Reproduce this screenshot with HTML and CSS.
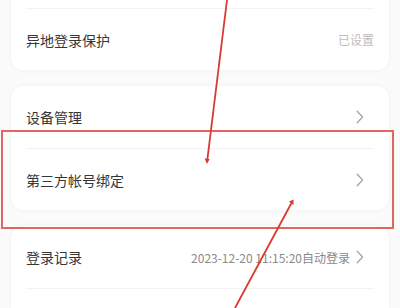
FILE: index.html
```
<!DOCTYPE html>
<html lang="zh-CN">
<head>
<meta charset="utf-8">
<link rel="stylesheet" href="styles.css">
</head>
<body>
<div class="page">
  <div class="card first">
    <div class="row stub"></div>
    <div class="row">
      <span class="label">异地登录保护</span>
      <span class="value light">已设置</span>
    </div>
  </div>
  <div class="card">
    <div class="row">
      <span class="label">设备管理</span>
      <span class="chev"><svg width="8" height="14" viewBox="0 0 8 14"><path d="M1.2 1.2 L6.6 7 L1.2 12.8" fill="none" stroke="#a8a8a8" stroke-width="1.4" stroke-linecap="round" stroke-linejoin="round"/></svg></span>
    </div>
    <div class="row">
      <span class="label">第三方帐号绑定</span>
      <span class="chev"><svg width="8" height="14" viewBox="0 0 8 14"><path d="M1.2 1.2 L6.6 7 L1.2 12.8" fill="none" stroke="#a8a8a8" stroke-width="1.4" stroke-linecap="round" stroke-linejoin="round"/></svg></span>
    </div>
  </div>
  <div class="card last">
    <div class="row">
      <span class="label">登录记录</span>
      <span class="value">2023-12-20 11:15:20自动登录</span>
      <span class="chev"><svg width="8" height="14" viewBox="0 0 8 14"><path d="M1.2 1.2 L6.6 7 L1.2 12.8" fill="none" stroke="#a8a8a8" stroke-width="1.4" stroke-linecap="round" stroke-linejoin="round"/></svg></span>
    </div>
    <div class="row stub-end"></div>
  </div>
</div>
<svg class="annot" width="400" height="308" viewBox="0 0 400 308">
  <rect x="2" y="131" width="391" height="97" fill="none" stroke="#e26660" stroke-width="2"/>
  <line x1="227" y1="0" x2="207.3" y2="160" stroke="#d93a30" stroke-width="1.8"/>
  <path d="M204.6 158.5 L207 164 L209.6 159 Z" fill="#d93a30"/>
  <line x1="235" y1="308" x2="291.5" y2="203" stroke="#d93a30" stroke-width="1.8"/>
  <path d="M289 201.5 L293.5 199.5 L293.5 205 Z" fill="#d93a30"/>
</svg>
</body>
</html>
```
FILE: styles.css
```
html, body {
  margin: 0;
  padding: 0;
}
body {
  width: 400px;
  height: 308px;
  overflow: hidden;
  background: #fbfbfb;
  font-family: "Noto Sans CJK SC", "Noto Sans", sans-serif;
  position: relative;
}
.page {
  display: flex;
  flex-direction: column;
  gap: 16px;
  padding: 0 11px;
}
.card {
  background: #fff;
  border-radius: 12px;
  box-shadow: 0 0 5px rgba(0, 0, 0, 0.05);
  padding: 0 15px;
}
.card.first {
  border-radius: 0 0 12px 12px;
}
.card.last {
  border-radius: 12px 12px 0 0;
}
.row {
  height: 62px;
  display: flex;
  align-items: center;
  border-top: 1px solid #f3f3f3;
  box-sizing: border-box;
}
.row:first-child {
  border-top: none;
}
.row.stub {
  height: 8px;
}
.row.stub-end {
  height: 20px;
}
.label {
  flex: 1;
  font-size: 14px;
  color: #363636;
}
.value {
  font-size: 12px;
  color: #8a8a8a;
}
.value.light {
  color: #bdbdbd;
}
.chev {
  display: flex;
  align-items: center;
  margin-left: 6px;
  margin-right: 10px;
}
.annot {
  position: absolute;
  left: 0;
  top: 0;
}
```
